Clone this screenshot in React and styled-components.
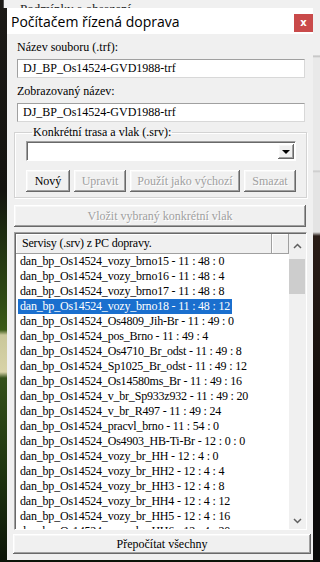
import React from 'react';
import styled, { createGlobalStyle, css } from 'styled-components';

const Global = createGlobalStyle`
    html, body {
        margin: 0;
        padding: 0;
        background: #111;
        overflow: hidden;
    }
`;

const Desktop = styled.div`
    width: 320px;
    height: 562px;
    display: grid;
    grid-template-columns: 7px 306px 7px;
    overflow: hidden;
    font-family: "Liberation Serif", "DejaVu Serif", serif;
    font-size: 12px;
    color: #000;
`;

const LeftEdge = styled.div`
    background: linear-gradient(180deg, #1c1a17 0, #14130f 190px, #1d2a10 230px, #2f4a14 300px, #3c5c18 330px, #c9c79a 335px, #d8d3a8 372px, #34501a 378px, #1f3510 470px, #0c1408 562px);
`;

const RightEdge = styled.div`
    background: linear-gradient(180deg, #f0f0f0 0, #f0f0f0 55px, #bdbdbd 56px, #e9e9e9 58px, #e9e9e9 170px, #c8c8c8 171px, #e4e4e4 173px, #e4e4e4 232px, #2a1d17 236px, #120d0a 400px, #0a0a0a 562px);
`;

const Center = styled.div`
    display: flex;
    flex-direction: column;
    min-height: 0;
    padding-bottom: 2px;
    background: #0c1408;
`;

const BehindStrip = styled.div`
    height: 8px;
    margin-left: -4px;
    background: #f0f0f0;
    border-left: 1px solid #555;
    overflow: hidden;
    padding-left: 16px;
    line-height: 18px;
    font-size: 13px;
    color: #222;
    white-space: nowrap;
`;

const Window = styled.div`
    flex: 1;
    display: flex;
    flex-direction: column;
    background: #f0f0f0;
    min-height: 0;
`;

const TitleBar = styled.div`
    height: 26px;
    background: #fff;
    display: flex;
    align-items: center;
    justify-content: space-between;
    padding-left: 4px;
`;

const Title = styled.div`
    font-family: "Open Sans", "Noto Sans", sans-serif;
    font-size: 14px;
    color: #000;
    margin-top: 1px;
`;

const CloseButton = styled.div`
    width: 19px;
    height: 18px;
    background: #c94a4a;
    color: #fff;
    display: flex;
    align-items: center;
    justify-content: center;
    font-family: "DejaVu Sans", sans-serif;
    font-size: 10px;
    font-weight: bold;
    margin-top: 3px;
`;

const Body = styled.div`
    flex: 1;
    display: flex;
    flex-direction: column;
    min-height: 0;
`;

const Label = styled.div`
    line-height: 15px;
    margin: 6px 0 0 10px;
    white-space: nowrap;
`;

const TextBox = styled.div`
    height: 19px;
    margin: 4px 8px 0 10px;
    background: #fff;
    box-sizing: border-box;
    border: 1px solid;
    border-color: #a0a0a0 #d8d8d8 #d8d8d8 #a0a0a0;
    padding-left: 5px;
    line-height: 17px;
    white-space: nowrap;
`;

const GroupBox = styled.fieldset`
    margin: 3px 6px 0 7px;
    padding: 2px 10px 5px 11px;
    border: 1px solid #d3d3d3;
    box-shadow: inset 1px 1px #fff, 1px 1px #fff;
    min-width: 0;
`;

const Legend = styled.legend`
    padding: 0 1px;
    margin-left: 6px;
    line-height: 14px;
    white-space: nowrap;
`;

const Combo = styled.div`
    height: 20px;
    box-sizing: border-box;
    background: #fff;
    border: 1px solid;
    border-color: #a0a0a0 #fff #fff #a0a0a0;
    box-shadow: inset 1px 1px #696969;
    display: flex;
    justify-content: flex-end;
    align-items: stretch;
    padding: 2px 1px 1px 2px;
`;

const raised = css`
    background: #f0f0f0;
    border: none;
    box-shadow: inset -1px -1px #696969, inset 1px 1px #fff, inset -2px -2px #a0a0a0, inset 2px 2px #f7f7f7;
`;

const DropButton = styled.div`
    ${raised};
    width: 16px;
    display: flex;
    align-items: center;
    justify-content: center;
`;

const Arrow = styled.div`
    width: 0;
    height: 0;
    border-left: 4px solid transparent;
    border-right: 4px solid transparent;
    border-top: 4px solid #000;
    margin-top: 1px;
`;

const ButtonRow = styled.div`
    display: flex;
    gap: 4px;
    margin-top: 9px;
`;

const Button = styled.div`
    ${raised};
    height: ${p => p.$h || 22}px;
    width: ${p => p.$w ? `${p.$w}px` : 'auto'};
    flex-shrink: 0;
    box-sizing: border-box;
    display: flex;
    align-items: center;
    justify-content: center;
    white-space: nowrap;
    color: ${p => p.$disabled ? '#a0a0a0' : '#000'};
    text-shadow: ${p => p.$disabled ? '1px 1px #fff' : 'none'};
    margin: ${p => p.$m || '0'};
`;

const ListView = styled.div`
    height: 298px;
    flex-shrink: 0;
    margin: 5px 6px 0 7px;
    box-sizing: border-box;
    border: 1px solid;
    border-color: #a0a0a0 #fff #fff #a0a0a0;
    box-shadow: inset 1px 1px #696969;
    background: #fff;
    display: grid;
    grid-template-columns: 1fr 17px;
    overflow: hidden;
    padding: 1px 0 0 1px;
`;

const ListMain = styled.div`
    display: flex;
    flex-direction: column;
    min-width: 0;
    min-height: 0;
    overflow: hidden;
    letter-spacing: -0.2px;
`;

const HeaderRow = styled.div`
    display: grid;
    grid-template-columns: 256px 1fr;
    height: 20px;
    flex-shrink: 0;
`;

const HeaderCell = styled.div`
    background: #f0f0f0;
    box-shadow: inset -1px -1px #a0a0a0, inset 1px 1px #fff;
    padding-left: 6px;
    line-height: 19px;
    white-space: nowrap;
    overflow: hidden;
`;

const Row = styled.div`
    height: 15px;
    line-height: 15px;
    padding-left: 2px;
    white-space: nowrap;
    flex-shrink: 0;
`;

const RowText = styled.span`
    display: inline-block;
    padding: 0 2px;
    background: ${p => p.$selected ? '#1a6fce' : 'transparent'};
    color: ${p => p.$selected ? '#fff' : '#000'};
`;

const ScrollBar = styled.div`
    background: #f0f0f0;
    display: flex;
    flex-direction: column;
    align-items: center;
    padding-top: 4px;
    min-height: 0;
`;

const Chevron = styled.svg`
    width: 9px;
    height: 6px;
    margin: 5px 0;
    flex-shrink: 0;
`;

const Track = styled.div`
    flex: 1;
    width: 100%;
    display: flex;
    flex-direction: column;
`;

const Thumb = styled.div`
    height: 35px;
    margin: 5px 1px 0 0;
    background: #cdcdcd;
`;

const Spacer = styled.div`
    flex: 1;
`;

const rows = [
    'dan_bp_Os14524_vozy_brno15 - 11 : 48 : 0',
    'dan_bp_Os14524_vozy_brno16 - 11 : 48 : 4',
    'dan_bp_Os14524_vozy_brno17 - 11 : 48 : 8',
    'dan_bp_Os14524_vozy_brno18 - 11 : 48 : 12',
    'dan_bp_Os14524_Os4809_Jih-Br - 11 : 49 : 0',
    'dan_bp_Os14524_pos_Brno - 11 : 49 : 4',
    'dan_bp_Os14524_Os4710_Br_odst - 11 : 49 : 8',
    'dan_bp_Os14524_Sp1025_Br_odst - 11 : 49 : 12',
    'dan_bp_Os14524_Os14580ms_Br - 11 : 49 : 16',
    'dan_bp_Os14524_v_br_Sp933z932 - 11 : 49 : 20',
    'dan_bp_Os14524_v_br_R497 - 11 : 49 : 24',
    'dan_bp_Os14524_pracvl_brno - 11 : 54 : 0',
    'dan_bp_Os14524_Os4903_HB-Ti-Br - 12 : 0 : 0',
    'dan_bp_Os14524_vozy_br_HH - 12 : 4 : 0',
    'dan_bp_Os14524_vozy_br_HH2 - 12 : 4 : 4',
    'dan_bp_Os14524_vozy_br_HH3 - 12 : 4 : 8',
    'dan_bp_Os14524_vozy_br_HH4 - 12 : 4 : 12',
    'dan_bp_Os14524_vozy_br_HH5 - 12 : 4 : 16',
    'dan_bp_Os14524_vozy_br_HH6 - 12 : 4 : 20',
];

const App = () => {
    return (
        <Desktop>
            <Global />
            <LeftEdge />
            <Center>
                <BehindStrip>Podmínky a obsazení</BehindStrip>
                <Window>
                    <TitleBar>
                        <Title>Počítačem řízená doprava</Title>
                        <CloseButton>x</CloseButton>
                    </TitleBar>
                    <Body>
                        <Label>Název souboru (.trf):</Label>
                        <TextBox>DJ_BP_Os14524-GVD1988-trf</TextBox>
                        <Label>Zobrazovaný název:</Label>
                        <TextBox>DJ_BP_Os14524-GVD1988-trf</TextBox>
                        <GroupBox>
                            <Legend>Konkrétní trasa a vlak (.srv):</Legend>
                            <Combo>
                                <DropButton><Arrow /></DropButton>
                            </Combo>
                            <ButtonRow>
                                <Button $w={44}>Nový</Button>
                                <Button $w={52} $disabled>Upravit</Button>
                                <Button $w={110} $disabled>Použít jako výchozí</Button>
                                <Button $w={52} $disabled>Smazat</Button>
                            </ButtonRow>
                        </GroupBox>
                        <Button $disabled $m="7px 7px 0 7px">Vložit vybraný konkrétní vlak</Button>
                        <ListView>
                            <ListMain>
                                <HeaderRow>
                                    <HeaderCell>Servisy (.srv) z PC dopravy.</HeaderCell>
                                    <HeaderCell />
                                </HeaderRow>
                                {rows.map((r, i) => (
                                    <Row key={i}>
                                        <RowText $selected={i === 3}>{r}</RowText>
                                    </Row>
                                ))}
                            </ListMain>
                            <ScrollBar>
                                <Chevron viewBox="0 0 9 6">
                                    <path d="M1 5 L4.5 1.5 L8 5" stroke="#606060" strokeWidth="1.5" fill="none" />
                                </Chevron>
                                <Track>
                                    <Thumb />
                                    <Spacer />
                                </Track>
                                <Chevron viewBox="0 0 9 6">
                                    <path d="M1 1 L4.5 4.5 L8 1" stroke="#606060" strokeWidth="1.5" fill="none" />
                                </Chevron>
                            </ScrollBar>
                        </ListView>
                        <Button $h={20} $m="4px 2px 0 6px">Přepočítat všechny</Button>
                    </Body>
                </Window>
            </Center>
            <RightEdge />
        </Desktop>
    );
};

export default App;
